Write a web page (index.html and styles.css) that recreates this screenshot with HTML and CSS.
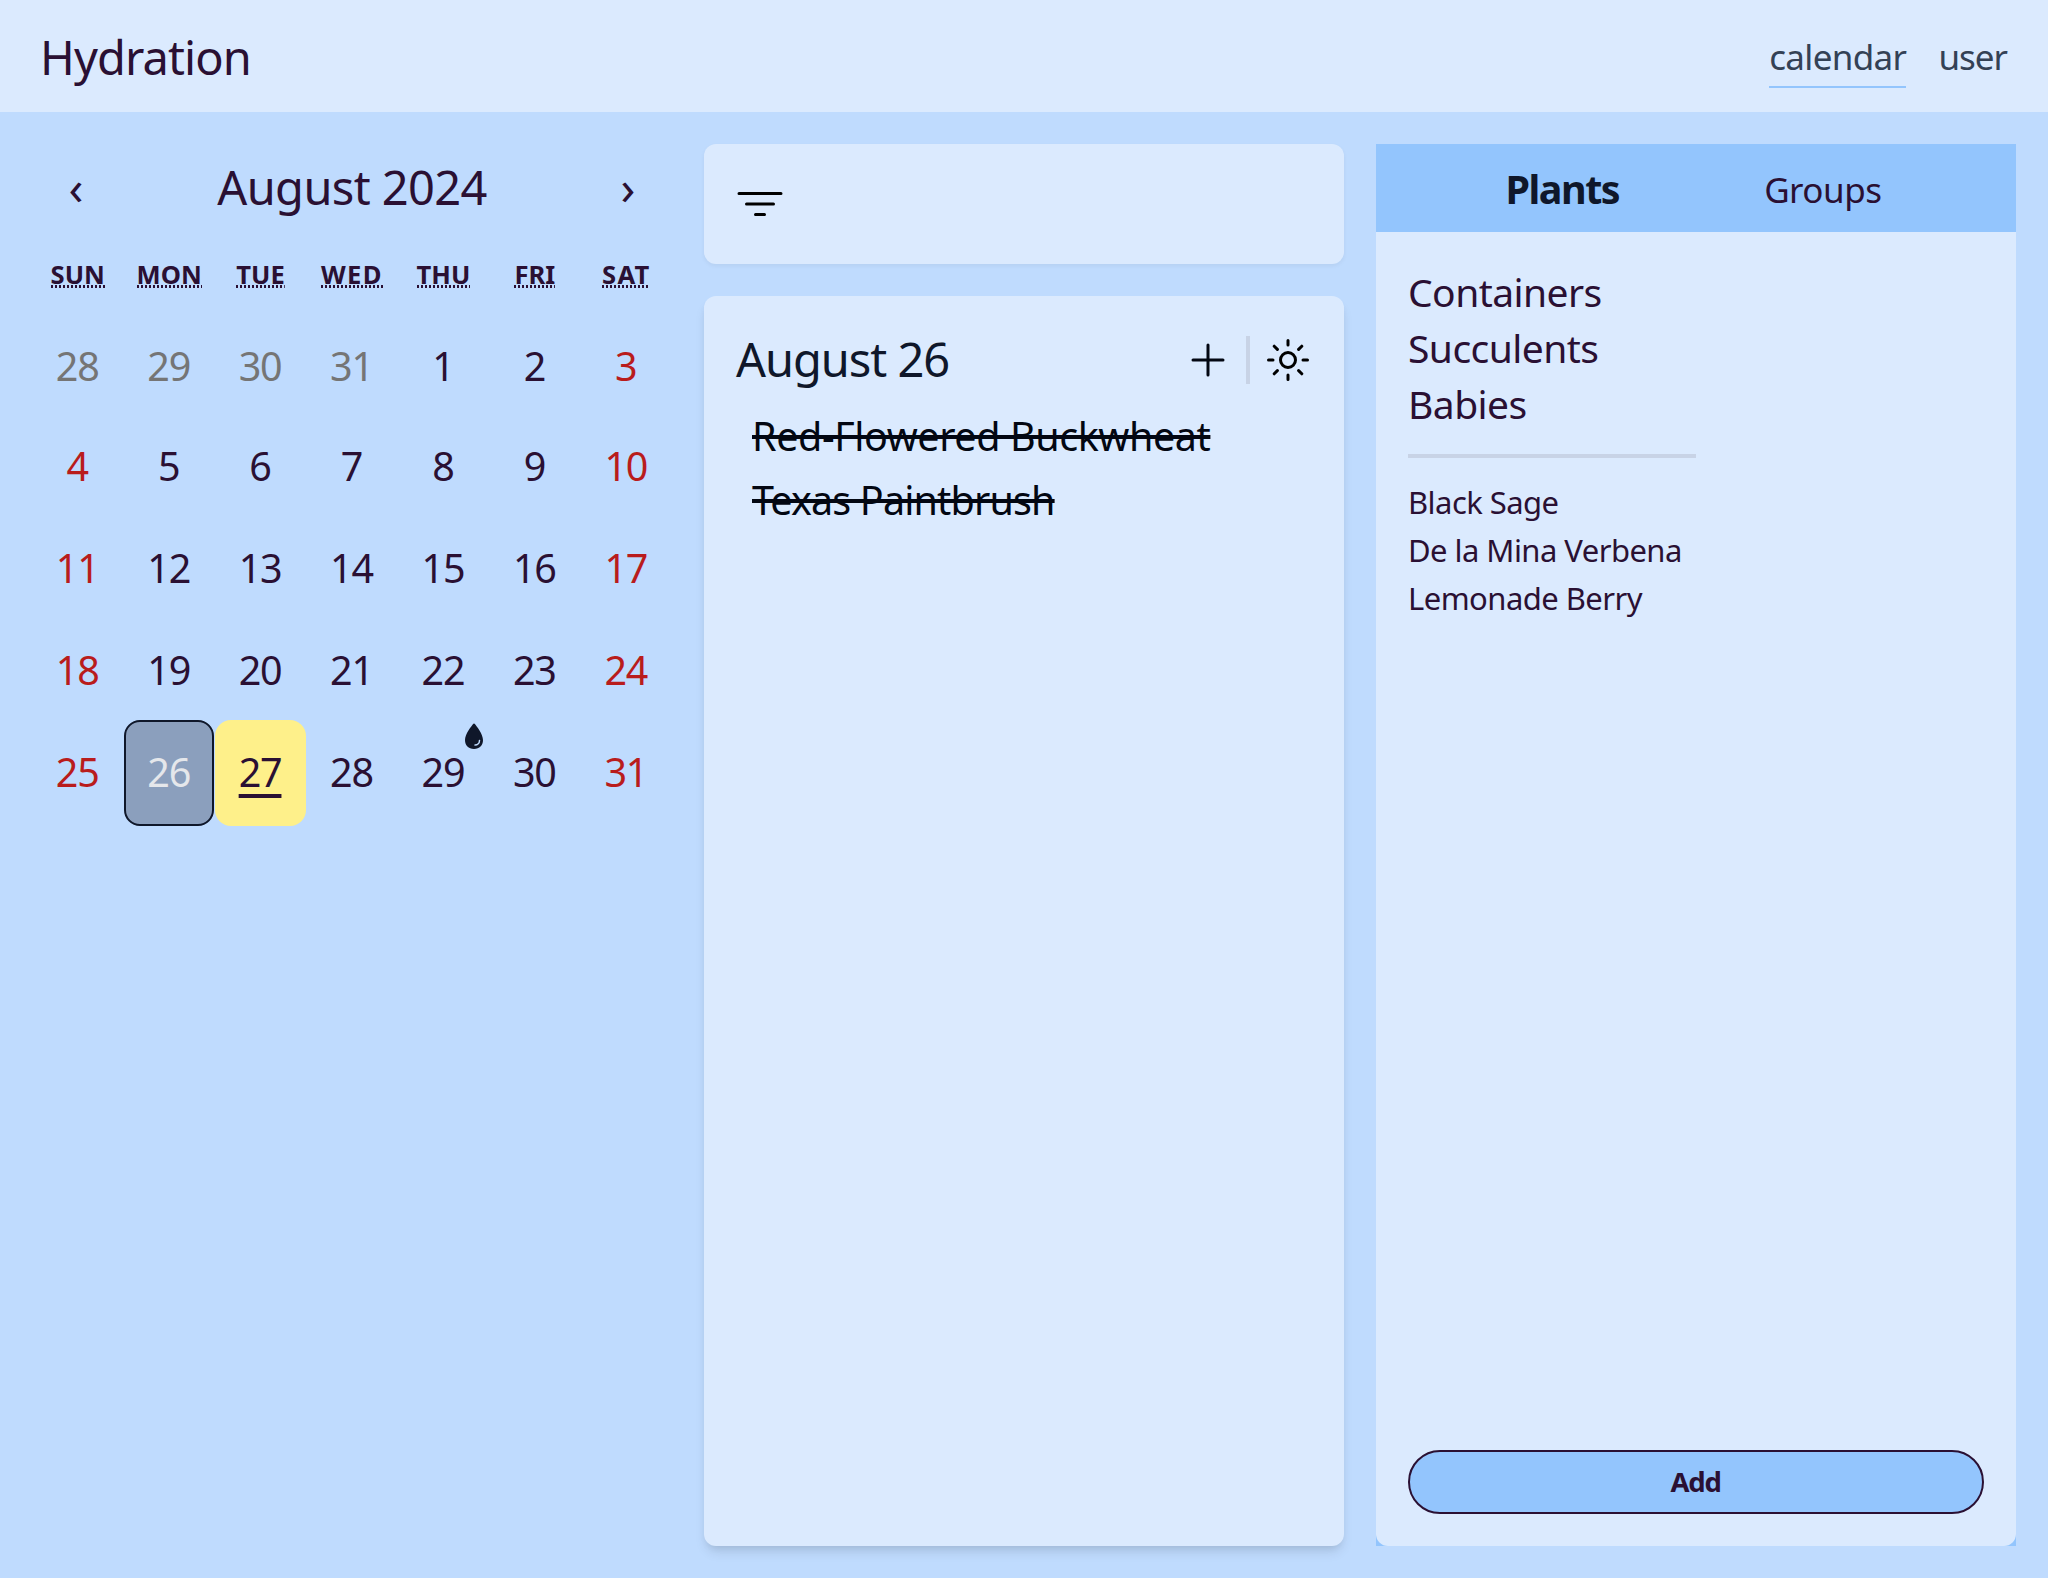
FILE: index.html
```html
<!DOCTYPE html>
<html lang="en">
<head>
<meta charset="utf-8">
<title>Hydration</title>
<link rel="stylesheet" href="styles.css">
</head>
<body>
<header class="topbar">
  <h1 class="brand">Hydration</h1>
  <nav class="nav">
    <a class="nav-link active">calendar</a>
    <a class="nav-link nav-user">user</a>
  </nav>
</header>
<main class="main">
  <section class="calendar">
    <div class="cal-nav">
      <button class="cal-arrow">‹</button>
      <span class="cal-label">August 2024</span>
      <button class="cal-arrow">›</button>
    </div>
    <div class="weekdays">
      <span><abbr>SUN</abbr></span><span><abbr>MON</abbr></span><span><abbr>TUE</abbr></span><span><abbr class="wed">WED</abbr></span><span><abbr>THU</abbr></span><span><abbr>FRI</abbr></span><span><abbr class="sat">SAT</abbr></span>
    </div>
    <div class="days">
      <div class="day other">28</div><div class="day other">29</div><div class="day other">30</div><div class="day other">31</div><div class="day">1</div><div class="day">2</div><div class="day weekend">3</div>
      <div class="day weekend">4</div><div class="day">5</div><div class="day">6</div><div class="day">7</div><div class="day">8</div><div class="day">9</div><div class="day weekend">10</div>
      <div class="day weekend">11</div><div class="day">12</div><div class="day">13</div><div class="day">14</div><div class="day">15</div><div class="day">16</div><div class="day weekend">17</div>
      <div class="day weekend">18</div><div class="day">19</div><div class="day">20</div><div class="day">21</div><div class="day">22</div><div class="day">23</div><div class="day weekend">24</div>
      <div class="day weekend">25</div><div class="day selected">26</div><div class="day today">27</div><div class="day">28</div>
      <div class="day">29<svg class="drop" viewBox="0 0 512 512"><path d="M265.12 60.12a12 12 0 0 0-18.23 0C215.23 97.15 112 225.17 112 320c0 88.37 55.64 144 144 144s144-55.63 144-144c0-94.83-103.23-222.85-134.88-259.88zM272 412a12 12 0 0 1-11.34-16 11.89 11.89 0 0 1 11.41-8A60.06 60.06 0 0 0 332 328.07a11.89 11.89 0 0 1 8-11.41A12 12 0 0 1 356 328a84.09 84.09 0 0 1-84 84z"/></svg></div>
      <div class="day">30</div><div class="day weekend">31</div>
    </div>
  </section>

  <section class="middle">
    <div class="card filter-card">
      <svg class="icon" viewBox="0 0 512 512"><path d="M32 144h448M112 256h288M208 368h96"/></svg>
    </div>
    <div class="card day-card">
      <div class="day-head">
        <h2 class="day-title">August 26</h2>
        <div class="tools">
          <svg class="icon plus" viewBox="0 0 24 24"><path d="M12 4.5v15m7.5-7.5h-15"/></svg>
          <span class="divider"></span>
          <svg class="icon" viewBox="0 0 512 512"><path d="M256 48v48M256 416v48M403.08 108.92l-33.94 33.94M142.86 369.14l-33.94 33.94M464 256h-48M96 256H48M403.08 403.08l-33.94-33.94M142.86 142.86l-33.94-33.94"/><circle cx="256" cy="256" r="80"/></svg>
        </div>
      </div>
      <ul class="tasks">
        <li><s class="task-a">Red-Flowered Buckwheat</s></li>
        <li><s class="task-b">Texas Paintbrush</s></li>
      </ul>
    </div>
  </section>

  <aside class="side">
    <div class="tabs"><button class="tab current">Plants</button><button class="tab">Groups</button></div>
    <div class="side-body">
      <ul class="groups"><li>Containers</li><li>Succulents</li><li>Babies</li></ul>
      <hr class="rule">
      <ul class="plants"><li>Black Sage</li><li>De la Mina Verbena</li><li>Lemonade Berry</li></ul>
      <button class="add">Add</button>
    </div>
  </aside>
</main>
</body>
</html>
```
FILE: styles.css
```css
* { box-sizing: border-box; }
body {
  margin: 0;
  height: 1578px;
  display: flex;
  flex-direction: column;
  background: #bfdbfe;
  color: #2a1033;
  font-family: "Noto Sans", sans-serif;
}
h1, h2, ul { margin: 0; padding: 0; font-weight: 400; list-style: none; }
button { border: 0; margin: 0; padding: 0; background: none; color: inherit; font: inherit; }

.topbar {
  height: 112px;
  padding: 0 41px 0 40px;
  display: flex;
  align-items: center;
  justify-content: space-between;
  background: #dbeafe;
}
.brand { font-size: 47px; line-height: 64px; padding-top: 1px; letter-spacing: -0.9px; }
.nav { display: flex; gap: 32px; color: #334155; }
.nav-link {
  padding: 5px 0 1px;
  border-bottom: 2px solid transparent;
  font-size: 35px;
  line-height: 56px;
  letter-spacing: -0.65px;
}
.nav-user { letter-spacing: -1px; }
.nav-link.active { border-color: #93c5fd; }

.main {
  flex: 1;
  min-height: 0;
  padding: 32px;
  display: grid;
  grid-template-columns: repeat(3, minmax(0, 1fr));
  gap: 32px;
}

.cal-nav { height: 82px; display: flex; align-items: center; font-size: 48px; line-height: 64px; }
.cal-arrow { width: 88px; padding-top: 4px; }
.cal-label { flex: 1; padding-top: 4px; text-align: center; font-size: 47px; letter-spacing: -0.62px; }
.weekdays {
  height: 88px;
  padding-top: 34px;
  display: grid;
  grid-template-columns: repeat(7, 1fr);
  justify-items: center;
  align-items: start;
  font-size: 25.6px;
  font-weight: 700;
}
.weekdays span { display: flex; }
.weekdays abbr {
  height: 28px;
  line-height: 30px;
  background: repeating-linear-gradient(90deg, #2a1033 0 2px, transparent 2px 4px) bottom / 100% 3px no-repeat;
}
.weekdays .wed { letter-spacing: 1.4px; }
.weekdays .sat { letter-spacing: 1.2px; }
.days {
  display: grid;
  grid-template-columns: repeat(7, 1fr);
  grid-template-rows: 100px 102px 102px 102px 106px;
}
.day {
  position: relative;
  text-align: center;
  text-indent: -1px;
  font-size: 39.5px;
  line-height: 104px;
  letter-spacing: -1.2px;
}
.other { color: #757575; }
.weekend { color: #b91c1c; }
.selected {
  margin: 0 1px;
  background: #8b9fbd;
  border: 2px solid #0f172a;
  border-radius: 16px;
  color: #e5e7eb;
  line-height: 100px;
}
.today {
  background: #fef08a;
  border-radius: 16px;
  text-decoration: underline 4px;
  text-underline-offset: 7px;
}
.drop { position: absolute; top: 0; right: -1px; width: 32px; height: 32px; fill: #0f172a; }

.middle { display: flex; flex-direction: column; gap: 32px; }
.card { background: #dbeafe; border-radius: 12px; padding: 32px; }
.filter-card { height: 120px; padding-top: 36px; box-shadow: 0 2px 4px rgba(0, 0, 0, 0.05); }
.day-card { flex: 1; box-shadow: 0 8px 12px -2px rgba(0, 0, 0, 0.1), 0 4px 8px -4px rgba(0, 0, 0, 0.1); }
.icon {
  display: block;
  width: 48px;
  height: 48px;
  fill: none;
  stroke: #000;
  stroke-width: 32;
  stroke-linecap: round;
  stroke-linejoin: round;
}
.plus { stroke: #030712; stroke-width: 1.5; }
.day-head { height: 64px; display: flex; align-items: center; justify-content: space-between; }
.day-title { font-size: 47px; line-height: 60px; padding-bottom: 3px; letter-spacing: -1.05px; color: #0f172a; }
.tools { display: flex; align-items: center; gap: 14px; }
.divider { width: 4px; height: 48px; background: #c8d3e6; }
.tasks { padding: 12px 16px 0; font-size: 39.5px; line-height: 64px; color: #030712; }
.tasks s { text-decoration-thickness: 4px; }
.task-a { letter-spacing: -0.42px; }
.task-b { letter-spacing: -0.85px; }

.side { display: flex; flex-direction: column; background: #93c5fd; }
.tabs { height: 88px; padding-right: 5px; display: flex; align-items: center; justify-content: center; gap: 145px; }
.tab { padding-top: 2px; font-size: 35px; letter-spacing: -0.5px; }
.tab.current { font-size: 39.5px; font-weight: 700; letter-spacing: -1.5px; color: #0f172a; }
.side-body {
  flex: 1;
  padding: 32px;
  display: flex;
  flex-direction: column;
  background: #dbeafe;
  border-radius: 0 0 12px 12px;
}
.groups { font-size: 39px; line-height: 56px; letter-spacing: -0.55px; }
.rule { width: 50%; height: 4px; margin: 22px 0 20px; border: 0; background: #c8d3e6; }
.plants { font-size: 31px; line-height: 48px; letter-spacing: -0.55px; }
.add {
  height: 64px;
  margin-top: auto;
  padding-bottom: 1px;
  border: 2px solid #2a1033;
  border-radius: 32px;
  background: #93c5fd;
  font-size: 27.5px;
  font-weight: 700;
  letter-spacing: -1.2px;
  text-indent: -1px;
}
```
